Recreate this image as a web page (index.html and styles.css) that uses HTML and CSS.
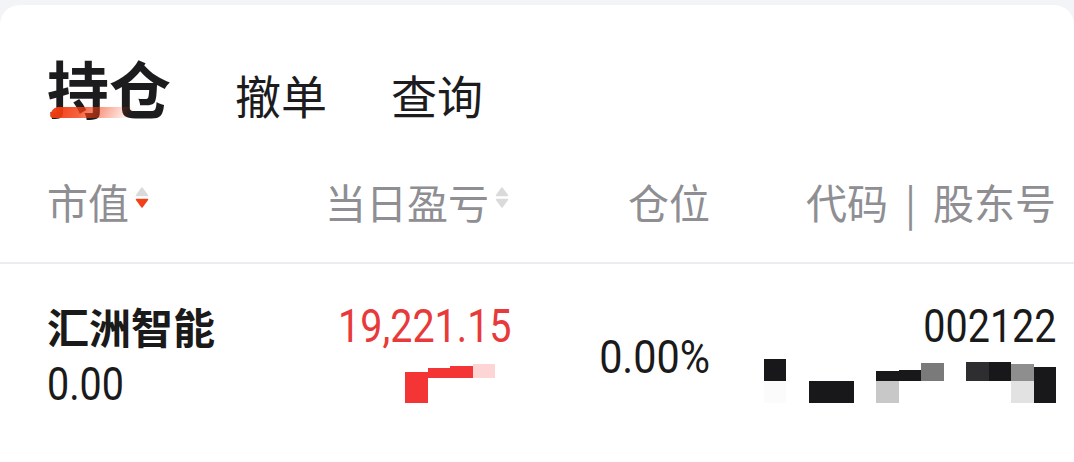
FILE: index.html
```html
<!DOCTYPE html>
<html lang="zh-CN">
<head>
  <meta charset="utf-8">
  <title>持仓</title>
  <link rel="stylesheet" href="styles.css">
</head>
<body>
  <div id="card">

    <div class="tabs">
      <span class="tab active">持仓<i class="underline"></i></span>
      <span class="tab">撤单</span>
      <span class="tab">查询</span>
    </div>

    <div class="grid head">
      <div class="c1">市值<svg class="sort" viewBox="0 0 14 24" width="14" height="24"><path class="up" d="M1.5 9.5 L7 2 L12.5 9.5 Z"/><path class="down on" d="M1.5 13.5 L12.5 13.5 L7 21 Z"/></svg></div>
      <div class="c2">当日盈亏<svg class="sort" viewBox="0 0 14 24" width="14" height="24"><path class="up" d="M1.5 9.5 L7 2 L12.5 9.5 Z"/><path class="down" d="M1.5 13.5 L12.5 13.5 L7 21 Z"/></svg></div>
      <div class="c3">仓位</div>
      <div class="c4">代码<span class="pipe">|</span>股东号</div>
    </div>

    <div class="grid row">
      <div class="c1">
        <div class="name">汇洲智能</div>
        <div class="num"><span>0.00</span></div>
      </div>
      <div class="c2">
        <div class="num red"><span>19,221.15</span></div>
        <!-- redacted -->
        <div class="mosaic red-mosaic">
          <i><b class="r h6"></b><b class="r h25"></b></i>
          <i><b class="r h10"></b></i>
          <i><b class="r h12"></b></i>
          <i><b class="p h14"></b></i>
        </div>
      </div>
      <div class="c3 num"><span>0.00%</span></div>
      <div class="c4">
        <div class="num"><span>002122</span></div>
        <!-- redacted -->
        <div class="mosaic">
          <i><b class="k h22"></b><b class="w"></b></i>
          <i></i>
          <i><b class="h22"></b><b class="k"></b></i>
          <i><b class="h22"></b><b class="k"></b></i>
          <i></i>
          <i><b class="k h10"></b><b class="g3"></b></i>
          <i><b class="k h11"></b></i>
          <i><b class="g1 h18"></b></i>
          <i></i>
          <i><b class="g0 h19"></b></i>
          <i><b class="k h19"></b></i>
          <i><b class="g2 h17"></b><b class="g4"></b></i>
          <i><b class="k h14"></b><b class="k"></b></i>
        </div>
      </div>
    </div>

  </div>
</body>
</html>
```

FILE: styles.css
```css
body {
  margin: 0;
  background-color: #f3f4f8;
  color: #1a1a1a;
  font-family: "Noto Sans CJK SC", "Noto Sans", sans-serif;
}

#card {
  margin-top: 5px;
  height: 457px;
  background-color: white;
  border-radius: 20px 20px 0 0;
  overflow: hidden;
}

/* tabs */
.tabs {
  display: flex;
  align-items: baseline;
  gap: 64px;
  padding: 42px 0 0 47px;
  height: 80px;
  line-height: 80px;
}

.tab {
  font-size: 46px;
  color: #1c1c1e;
}

.tab.active {
  position: relative;
  font-size: 62px;
  font-weight: bold;
}

.underline {
  position: absolute;
  left: 4px;
  top: 60px;
  width: 82px;
  height: 11px;
  border-radius: 5px;
  transform: skewX(-28deg);
  background: linear-gradient(90deg, #f33c10 0%, rgba(243, 60, 16, 0.8) 35%, rgba(243, 60, 16, 0.3) 75%, rgba(243, 60, 16, 0) 100%);
}

/* table */
.grid {
  display: grid;
  grid-template-columns: 250px 215px 198px 346px;
  padding: 0 18px 0 47px;
}

.c2, .c3, .c4 {
  text-align: right;
}

.head {
  margin-top: 49px;
  padding-bottom: 36px;
  border-bottom: 2px solid #ececf0;
  font-size: 41px;
  line-height: 50px;
  color: #8e8e93;
}

.head > div {
  display: flex;
  align-items: center;
}

.head .c2, .head .c3, .head .c4 {
  justify-content: flex-end;
}

.sort {
  margin: -6px 0 0 6px;
}

.sort path {
  fill: #dadada;
  stroke: #dadada;
  stroke-width: 1.5;
  stroke-linejoin: round;
}

.sort path.on {
  fill: #f2401a;
  stroke: #f2401a;
}

.head .c2 .sort {
  margin-right: 3px;
}

.pipe {
  margin: 0 17px;
}

.row {
  padding-top: 33px;
}

.name {
  font-size: 42px;
  font-weight: bold;
  line-height: 58px;
}

.num {
  font-family: Roboto, "Liberation Sans", sans-serif;
  font-size: 47px;
  line-height: 58px;
  color: #1a1a1a;
}

/* the app uses a narrow digit face */
.num span {
  display: inline-block;
  transform: scaleX(0.84);
  transform-origin: right center;
}

.c1 .num span {
  transform-origin: left center;
}

.num.red {
  color: #e83a3a;
}

.row .c3 {
  align-self: center;
  padding-top: 3px;
}

.row .c3 span {
  transform: scaleX(0.88);
}

/* pixel mosaic over hidden text */
.mosaic {
  display: flex;
  justify-content: flex-end;
  height: 58px;
  padding-top: 4px;
  box-sizing: border-box;
}

.mosaic i {
  display: flex;
  flex-direction: column;
  width: 22.5px;
  height: 44px;
}

.mosaic b {
  display: block;
  height: 22px;
}

.mosaic i > b:first-child {
  margin-top: auto;
}

.mosaic i > b:only-child {
  margin-bottom: 22px;
}

.red-mosaic {
  margin-right: 17px;
}

.red-mosaic i > b:only-child {
  margin-bottom: 25px;
}

.k { background: #18181a; }
.w { background: #fbfbfb; }
.g0 { background: #2e2e30; }
.g1 { background: #7a7a7a; }
.g2 { background: #8e8e8e; }
.g3 { background: #c8c8c8; }
.g4 { background: #e2e2e2; }
.r { background: #f43535; }
.p { background: #fdd5d5; }

.mosaic b.h6 { height: 6px; }
.mosaic b.h10 { height: 10px; }
.mosaic b.h11 { height: 11px; }
.mosaic b.h12 { height: 12px; }
.mosaic b.h14 { height: 14px; }
.mosaic b.h17 { height: 17px; }
.mosaic b.h18 { height: 18px; }
.mosaic b.h19 { height: 19px; }
.mosaic b.h22 { height: 22px; }
.mosaic b.h25 { height: 25px; }
```
